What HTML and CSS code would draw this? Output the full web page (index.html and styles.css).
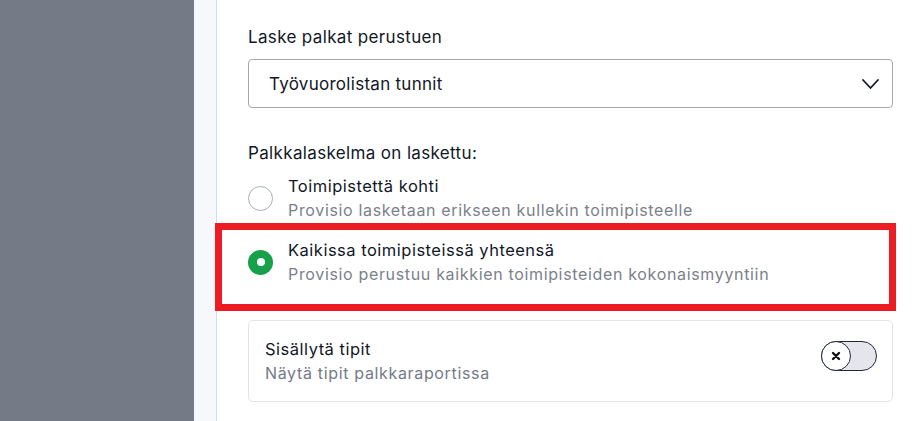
FILE: index.html
```html
<!DOCTYPE html>
<html lang="fi">
<head>
<meta charset="utf-8">
<link rel="stylesheet" href="styles.css">
</head>
<body>
<div class="app">
  <aside class="sidebar"></aside>
  <div class="strip"></div>
  <main class="content">
    <div class="field">
      <label class="label">Laske palkat perustuen</label>
      <div class="select">
        <span>Työvuorolistan tunnit</span>
        <svg class="chev" width="17" height="10" viewBox="0 0 17 10"><path d="M1 1l7.5 8 7.5-8" fill="none" stroke="#111827" stroke-width="1.8" stroke-linecap="round" stroke-linejoin="round"/></svg>
      </div>
    </div>
    <div class="group">
      <div class="label">Palkkalaskelma on laskettu:</div>
      <div class="options">
        <div class="option">
          <span class="radio"></span>
          <div class="texts">
            <div class="title">Toimipistettä kohti</div>
            <div class="sub">Provisio lasketaan erikseen kullekin toimipisteelle</div>
          </div>
        </div>
        <div class="option selected">
          <span class="radio checked"></span>
          <div class="texts">
            <div class="title">Kaikissa toimipisteissä yhteensä</div>
            <div class="sub">Provisio perustuu kaikkien toimipisteiden kokonaismyyntiin</div>
          </div>
          <div class="highlight"></div>
        </div>
      </div>
    </div>
    <div class="card">
      <div class="texts">
        <div class="title">Sisällytä tipit</div>
        <div class="sub">Näytä tipit palkkaraportissa</div>
      </div>
      <div class="toggle">
        <span class="knob">
          <svg width="10" height="10" viewBox="0 0 10 10"><path d="M2 2l6 6M8 2l-6 6" stroke="#111" stroke-width="2.4" stroke-linecap="round"/></svg>
        </span>
      </div>
    </div>
  </main>
</div>
</body>
</html>
```
FILE: styles.css
```css
* { box-sizing: border-box; }
html, body { margin: 0; padding: 0; }
body {
  font-family: Inter, "Liberation Sans", sans-serif;
  color: #111827;
  background: #fff;
  width: 918px;
  height: 421px;
  overflow: hidden;
}
.app {
  display: flex;
  height: 421px;
}
.sidebar {
  width: 194px;
  flex: none;
  background: #747b86;
}
.strip {
  width: 23px;
  flex: none;
  background: #f7f8fb;
  border-right: 1px solid #c7dcfb;
}
.content {
  flex: 1;
  padding: 25px 25px 0 31px;
  display: flex;
  flex-direction: column;
}
.label {
  display: block;
  font-size: 17px;
  line-height: 24px;
  letter-spacing: 0.35px;
  color: #111827;
}
.field .label { margin-bottom: 10px; }
.select {
  height: 49px;
  border: 1px solid #a3a8b3;
  border-radius: 4px;
  display: flex;
  align-items: center;
  justify-content: space-between;
  padding: 0 13px 0 20px;
  font-size: 17px;
  letter-spacing: 0.28px;
  color: #111827;
}
.chev { display: block; }
.group { margin-top: 33px; }
.group .label { margin-bottom: 9px; }
.options {
  display: flex;
  flex-direction: column;
  gap: 16px;
}
.option {
  position: relative;
  display: flex;
  align-items: center;
  gap: 15px;
}
.radio {
  width: 25px;
  height: 25px;
  flex: none;
  border-radius: 50%;
  border: 1px solid #a8adb6;
  background: #fff;
}
.radio.checked {
  border: none;
  background: #16a04a;
  display: flex;
  align-items: center;
  justify-content: center;
}
.radio.checked::after {
  content: "";
  width: 8px;
  height: 8px;
  border-radius: 50%;
  background: #fff;
}
.title {
  font-size: 16.5px;
  line-height: 24px;
  letter-spacing: 0.5px;
  color: #111827;
}
.sub {
  font-size: 16px;
  line-height: 24px;
  letter-spacing: 0.66px;
  color: #7b818b;
}
.highlight {
  position: absolute;
  left: -33px;
  right: -3px;
  top: -15px;
  bottom: -25px;
  border: 7px solid #ed1c24;
  pointer-events: none;
}
.card {
  margin-top: 34px;
  height: 82px;
  border: 1px solid #e2e4e9;
  border-radius: 5px;
  display: flex;
  align-items: flex-start;
  justify-content: space-between;
  padding: 16px 15px 0 16px;
}
.card .sub { color: #747b88; }
.toggle {
  margin-top: 4px;
  width: 56px;
  height: 30px;
  border: 1px solid #1f2937;
  border-radius: 15px;
  background: #e4e6eb;
  position: relative;
}
.knob {
  position: absolute;
  left: -1px;
  top: -1px;
  width: 30px;
  height: 30px;
  border-radius: 50%;
  background: #fff;
  border: 1px solid #1f2937;
  display: flex;
  align-items: center;
  justify-content: center;
}
.knob svg { display: block; }
```
